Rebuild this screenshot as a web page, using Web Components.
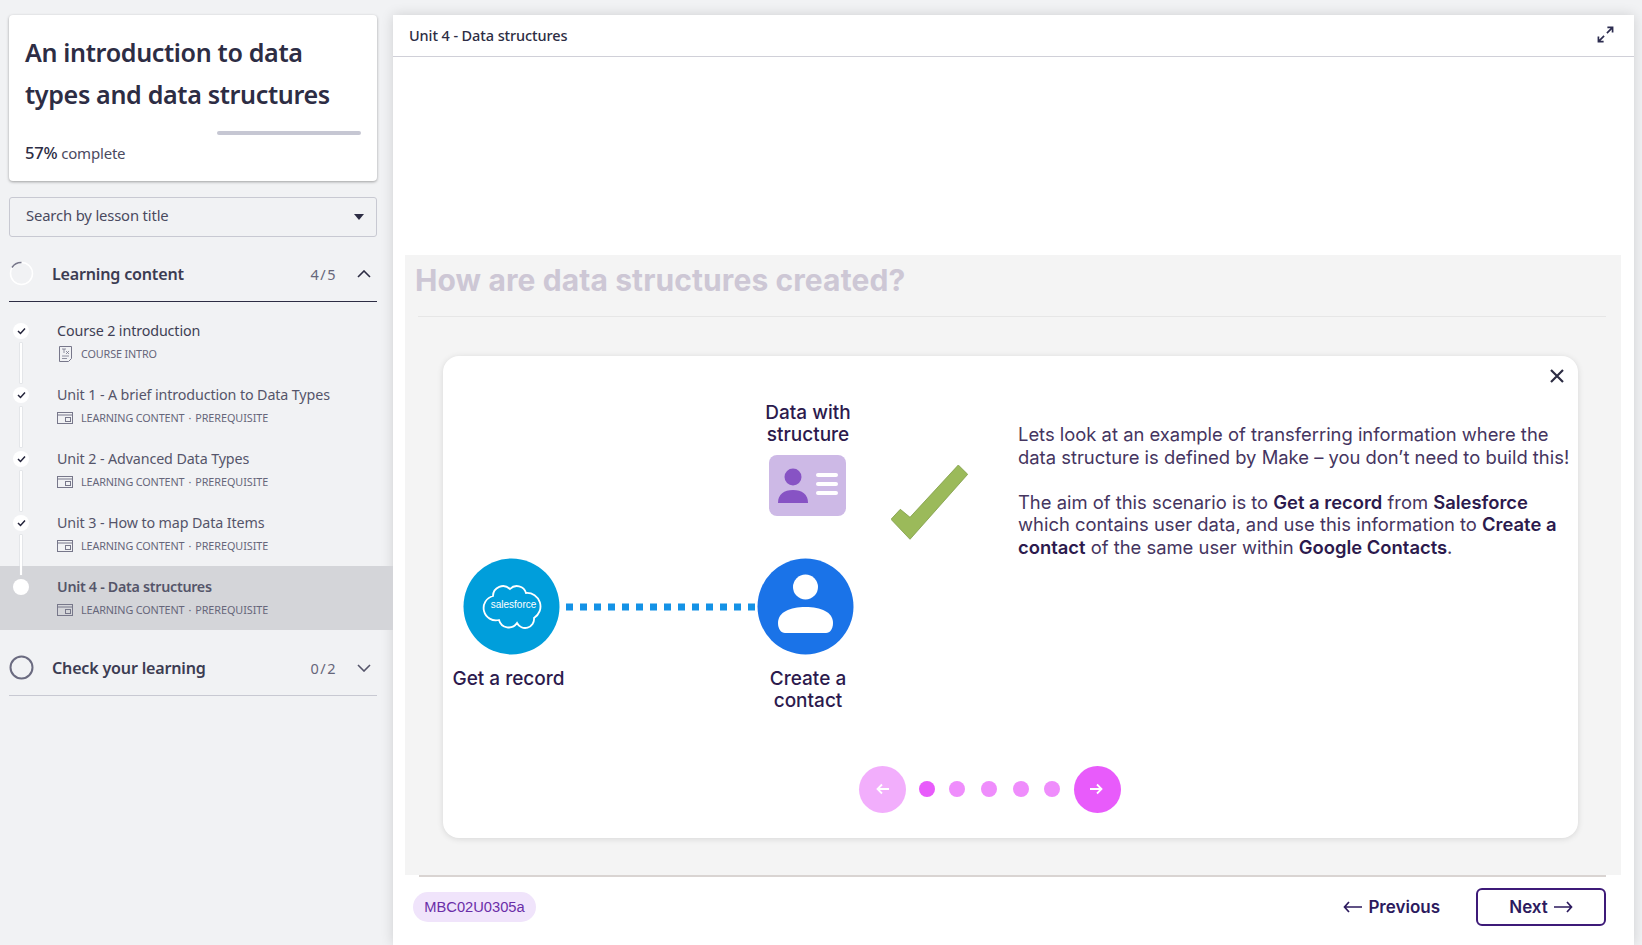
<!DOCTYPE html>
<html><head><meta charset="utf-8">
<style>
html,body{margin:0;height:100%;overflow:hidden;background:#f1f2f4}
body{font-family:"Noto Sans",sans-serif;color:#2d2d44}
app-shell{display:flex;height:945px}
</style></head><body>
<app-shell>
<course-sidebar></course-sidebar>
<lesson-panel></lesson-panel>
</app-shell>
<script>
function def(name, html){
  customElements.define(name, class extends HTMLElement{
    constructor(){super();this.attachShadow({mode:'open'}).innerHTML=typeof html==='function'?html(this):html;}
  });
}
const CAT=`<svg width="16" height="12" viewBox="0 0 16 12" fill="none" stroke="#77778a"><rect x=".5" y=".5" width="15" height="11"/><path d="M1 3h14"/><rect x="8.500" y="5.500" width="5" height="4"/></svg>`;
const DOC=`<svg width="13" height="16" viewBox="0 0 13 16" fill="none" stroke="#77778a"><path d="M.5.5h12v12l-3 3H.5z"/><path d="M3 3h4M5 3v4M7 5l3 3M10 5l-3 3M3 10h7M3 12.500h5" stroke-width=".8"/></svg>`;
def('lesson-item',h=>{
  const type=h.getAttribute('type'), done=h.hasAttribute('done'), active=h.hasAttribute('active'), first=h.hasAttribute('first'), last=h.hasAttribute('last');
  return `<style>
  :host{display:block;height:64px;position:relative;${active?'background:#d4d5d9;':''}}
  .dot{position:absolute;left:13px;top:13px;width:16px;height:16px;border-radius:50%;background:#fff;display:flex;align-items:center;justify-content:center}
  .line{position:absolute;z-index:1;left:20px;top:33px;height:40px;width:2px;background:#fff;box-shadow:0 0 0 .5px #d8d9dd}
  .body{padding:11px 0 0 57px}
  .t{font-size:14.300px;line-height:20px;color:${first?'#3f3f55':'#55556a'};font-weight:${active?600:400};letter-spacing:${active?'-.3px':'-.12px'};white-space:nowrap}
  .s{display:flex;align-items:center;gap:8px;margin-top:5px;font-size:10.800px;line-height:16px;color:#66667a;letter-spacing:-.13px;white-space:nowrap}
  .i{width:16px;display:flex;justify-content:center}
  .m{margin:0 4px}
  .q{letter-spacing:-.04px}
  </style>
  ${last?'':'<div class="line"></div>'}
  <div class="dot">${done?'<svg width="9" height="8" viewBox="0 0 9 8" fill="none" stroke="#23233a" stroke-width="1.500"><path d="M1 4l2.500 2.500L8 1.500"/></svg>':''}</div>
  <div class="body"><div class="t"><slot></slot></div><div class="s"><span class="i">${type==='intro'?DOC:CAT}</span><span>${type==='intro'?'COURSE INTRO':'LEARNING CONTENT<span class="m">·</span><span class="q">PREREQUISITE</span>'}</span></div></div>`;
});
def('section-head',h=>{
  const open=h.hasAttribute('open'), ring=h.hasAttribute('progress');
  return `<style>
  :host{display:flex;align-items:center;height:65px;padding-top:9px;margin:0 16px 0 9px;border-bottom:1px solid ${open?'#2d2d44':'#c8c9d2'};box-sizing:border-box;font-size:16.100px;font-weight:600;color:#3c3c52}
  svg.r{flex:none;margin-right:18px}
  .name{flex:1;letter-spacing:-.2px}
  .n{font-size:14.500px;font-weight:400;color:#66667a;margin-right:20px;letter-spacing:1.500px}
  .c{margin-right:6px;flex:none}
  </style>
  <svg class="r" width="25" height="25" viewBox="0 0 25 25" fill="none">${ring?'<circle cx="12.500" cy="12.500" r="11" stroke="#fff" stroke-width="1.500"/><path d="M3 6.500A11 11 0 0 1 12.500 1.500" stroke="#77778a" stroke-width="1.500"/>':'<circle cx="12.500" cy="12.500" r="11" stroke="#6b6b80" stroke-width="2"/>'}</svg>
  <span class="name"><slot></slot></span><span class="n">${h.getAttribute('count')}</span>
  <svg class="c" width="14" height="8" viewBox="0 0 14 8" fill="none" stroke="${open?'#2d2d44':'#55556a'}" stroke-width="1.600"><path d="${open?'M1 7l6-6 6 6':'M1 1l6 6 6-6'}"/></svg>`;
});
def('course-sidebar',`<style>
 :host{display:block;width:393px;flex:none;box-sizing:border-box;padding-top:15px}
 .card{margin:0 16px 0 9px;height:166px;box-sizing:border-box;background:#fff;border-radius:4px;box-shadow:0 1px 3px rgba(0,0,0,.35);padding:16px 16px 0}
 h1{margin:0;font-size:25.100px;line-height:42px;font-weight:600;color:#2d2d44;letter-spacing:-.35px}
 .bar{margin:16px 0 0 auto;width:144px;height:4px;background:#c6c7d3;border-radius:2px}
 .p{margin-top:7px;font-size:15px;line-height:22px;color:#4a4a5f;letter-spacing:-.2px}
 .p b{font-weight:500;color:#2d2d44;font-size:16.600px}
 .search{margin:16px 16px 0 9px;height:40px;box-sizing:border-box;border:1px solid #c8c9d2;border-radius:3px;display:flex;align-items:center;justify-content:space-between;padding:0 12px 4px 16px;font-size:14.800px;color:#4a4a5f;letter-spacing:-.15px}
 .tri{width:0;height:0;border:5px solid transparent;border-top:6px solid #2d2d44;border-bottom:0;margin-top:4px}
 .list{padding-top:8px;height:329px;box-sizing:border-box}
</style>
<div class="card"><h1>An introduction to data types and data structures</h1><div class="bar"></div><div class="p"><b>57%</b> complete</div></div>
<div class="search"><span>Search by lesson title</span><span class="tri"></span></div>
<section-head open progress count="4/5">Learning content</section-head>
<div class="list">
<lesson-item first done type="intro">Course 2 introduction</lesson-item>
<lesson-item done>Unit 1 - A brief introduction to Data Types</lesson-item>
<lesson-item done>Unit 2 - Advanced Data Types</lesson-item>
<lesson-item done>Unit 3 - How to map Data Items</lesson-item>
<lesson-item active last>Unit 4 - Data structures</lesson-item>
</div>
<section-head count="0/2">Check your learning</section-head>`);
def('data-diagram',`<style>
 :host{display:block;position:relative;width:552px;height:482px;flex:none;font-family:Inter,sans-serif;color:#2c1a4d;font-size:19px;line-height:22px;font-weight:500;text-align:center}
 .n{position:absolute}
 svg{display:block}
</style>
<div class="n" style="left:305px;top:46px;width:120px">Data with structure</div>
<svg class="n" style="left:326px;top:99px" width="77" height="61" viewBox="0 0 77 61"><rect width="77" height="61" rx="8" fill="#cdb9e6"/><circle cx="24" cy="22" r="8.500" fill="#8753c4"/><path d="M9 48c0-9 6-13 15-13s15 4 15 13z" fill="#8753c4"/><g fill="#fff"><rect x="47" y="18" width="22" height="4" rx="2"/><rect x="47" y="27" width="22" height="4" rx="2"/><rect x="47" y="36" width="22" height="4" rx="2"/></g></svg>
<svg class="n" style="left:448px;top:109px" width="77" height="75" viewBox="0 0 77 75"><path d="M0 54.300L9.300 44.300 19 52.300 67.300 0 76.700 9.300 19 74.300z" fill="#9bba5a" stroke="#7f9c45" stroke-width=".8"/></svg>
<svg class="n" style="left:20px;top:202px" width="97" height="97" viewBox="0 0 97 97"><circle cx="48.500" cy="48.500" r="48" fill="#009edb"/><path transform="translate(3 2)" d="M27 36A10 10 0 0 1 44 29A9.500 9.500 0 0 1 60 33A13.500 13.500 0 0 1 68 58A9 9 0 0 1 51 63A10 10 0 0 1 33 60A10.500 10.500 0 0 1 27 36z" fill="none" stroke="#fff" stroke-width="1.800"/></svg>
<svg class="n" style="left:123px;top:247px" width="192" height="8"><line x1="0" y1="4" x2="192" y2="4" stroke="#1492e6" stroke-width="7" stroke-dasharray="7 7"/></svg>
<svg class="n" style="left:314px;top:202px" width="97" height="97" viewBox="0 0 97 97"><circle cx="48.500" cy="48.500" r="48" fill="#1a73e8"/><circle cx="48.500" cy="29" r="12.500" fill="#fff"/><path d="M21 65c0-11 12-16 27.500-16S76 54 76 65c0 6-3 10-7 10H28c-4 0-7-4-7-10z" fill="#fff"/></svg>
<div class="n" style="left:3px;top:312px;width:125px">Get a record</div>
<div class="n" style="left:305px;top:312px;width:120px">Create a contact</div>
<span class="n" style="left:40.500px;top:243px;width:60px;font-family:'Liberation Sans',sans-serif;font-size:10px;line-height:12px;color:#fff;font-weight:400">salesforce</span>`);
def('slide-pager',`<style>
 :host{display:flex;align-items:center;height:48px}
 .b{width:47px;height:47px;border-radius:50%;display:flex;align-items:center;justify-content:center;background:#e85bfb;flex:none}
 .b.off{background:#f2aefc}
 .d{width:16px;height:16px;border-radius:50%;background:#ef8dfc;flex:none}
 .d.on{background:#e85bfb}
</style>
<div class="b off" style="margin-right:13px"><svg width="14" height="12" viewBox="0 0 14 12" fill="none" stroke="#fff" stroke-width="1.800"><path d="M13 6H1.500M6 1.500L1.500 6 6 10.500"/></svg></div>
<div class="d on" style="margin-right:14px"></div><div class="d" style="margin-right:16px"></div><div class="d" style="margin-right:16px"></div><div class="d" style="margin-right:15px"></div><div class="d" style="margin-right:14px"></div>
<div class="b"><svg style="margin-right:4px" width="14" height="12" viewBox="0 0 14 12" fill="none" stroke="#fff" stroke-width="1.800"><path d="M1 6h11.500M8 1.500L12.500 6 8 10.500"/></svg></div>`);
def('slide-modal',`<style>
 :host{display:block;position:relative;height:482px;box-sizing:border-box;background:#fff;border-radius:16px;box-shadow:0 1px 6px rgba(0,0,0,.12)}
 .row{display:flex;height:482px}
 .x{position:absolute;right:14px;top:13px}
 .txt{padding:67px 0 0 23px;font-family:Inter,sans-serif;font-size:18.400px;line-height:22.600px;color:#453560;white-space:nowrap}
 .txt b{font-weight:600;color:#2c1a4d}
 .txt p{margin:0 0 22.400px}
 .pg{position:absolute;left:416px;top:409px}
</style>
<svg class="x" width="14" height="14" viewBox="0 0 14 14" stroke="#2d2d44" stroke-width="2.200"><path d="M1 1l12 12M13 1L1 13"/></svg>
<div class="row"><data-diagram></data-diagram>
<div class="txt"><p>Lets look at an example of transferring information where the<br>data structure is defined by Make – you don’t need to build this!</p>
<p>The aim of this scenario is to <b>Get a record</b> from <b>Salesforce</b><br>which contains user data, and use this information to <b>Create a<br>contact</b> of the same user within <b>Google Contacts</b>.</p></div></div>
<slide-pager class="pg"></slide-pager>`);
def('lesson-panel',`<style>
 :host{display:flex;flex-direction:column;width:1241px;height:930px;margin-top:15px;flex:none;background:#fff;box-shadow:0 0 12px rgba(0,0,0,.14)}
 header{height:41px;flex:none;border-bottom:1px solid #d0d0d8;display:flex;align-items:center;justify-content:space-between;padding:0 20px 2px 16px;box-sizing:border-box;height:42px;font-size:14.500px;font-weight:500;color:#2d2d44;letter-spacing:-.1px}
 .gap{height:198px;flex:none}
 .stage{margin:0 13px 0 12px;height:620px;flex:none;background:#f4f4f4;box-sizing:border-box;padding:1px 43px 0 38px;display:flex;flex-direction:column}
 h2{margin:0 0 0 -28px;font-family:Inter,sans-serif;font-size:30px;line-height:49px;font-weight:700;color:#cdc7d5;letter-spacing:.1px}
 .rule{height:1px;background:#e6e6e6;margin:11px -28px 39px -25px}
 footer{flex:1;margin:0 28px 0 26px;border-top:2px solid #d9d4d2;padding-bottom:8px;display:flex;align-items:center;font-family:Inter,sans-serif}
 .code{margin-left:-6px;height:30px;width:123px;background:#f0e4fb;border-radius:15px;display:flex;align-items:center;justify-content:center;font-size:14.700px;color:#6a2ea8;font-family:"Liberation Sans",sans-serif}
 .sp{flex:1}
 .nav{display:flex;align-items:center;gap:6px;font-size:17px;font-weight:600;color:#2c1a5e}
 .next{margin-left:36px;width:130px;height:38px;box-sizing:border-box;border:2px solid #3d1a78;border-radius:6px;justify-content:center}
</style>
<header><span>Unit 4 - Data structures</span>
<svg width="17" height="17" viewBox="0 0 18 18" fill="none" stroke="#2d2d50" stroke-width="1.800"><path d="M11 1.500h5.500V7M16.500 1.500L10.500 7.500M7 16.500H1.500V11M1.500 16.500L7.500 10.500"/></svg></header>
<div class="gap"></div>
<div class="stage"><h2>How are data structures created?</h2><div class="rule"></div><slide-modal></slide-modal></div>
<footer><span class="code">MBC02U0305a</span><span class="sp"></span>
<span class="nav"><svg width="19" height="12" viewBox="0 0 19 12" fill="none" stroke="#2c1a5e" stroke-width="1.700"><path d="M19 6H1.500M6 1L1.500 6 6 11"/></svg>Previous</span>
<span class="nav next">Next<svg width="19" height="12" viewBox="0 0 19 12" fill="none" stroke="#2c1a5e" stroke-width="1.700"><path d="M0 6h17.500M13 1l4.500 5L13 11"/></svg></span></footer>`);
</script>
</body></html>
